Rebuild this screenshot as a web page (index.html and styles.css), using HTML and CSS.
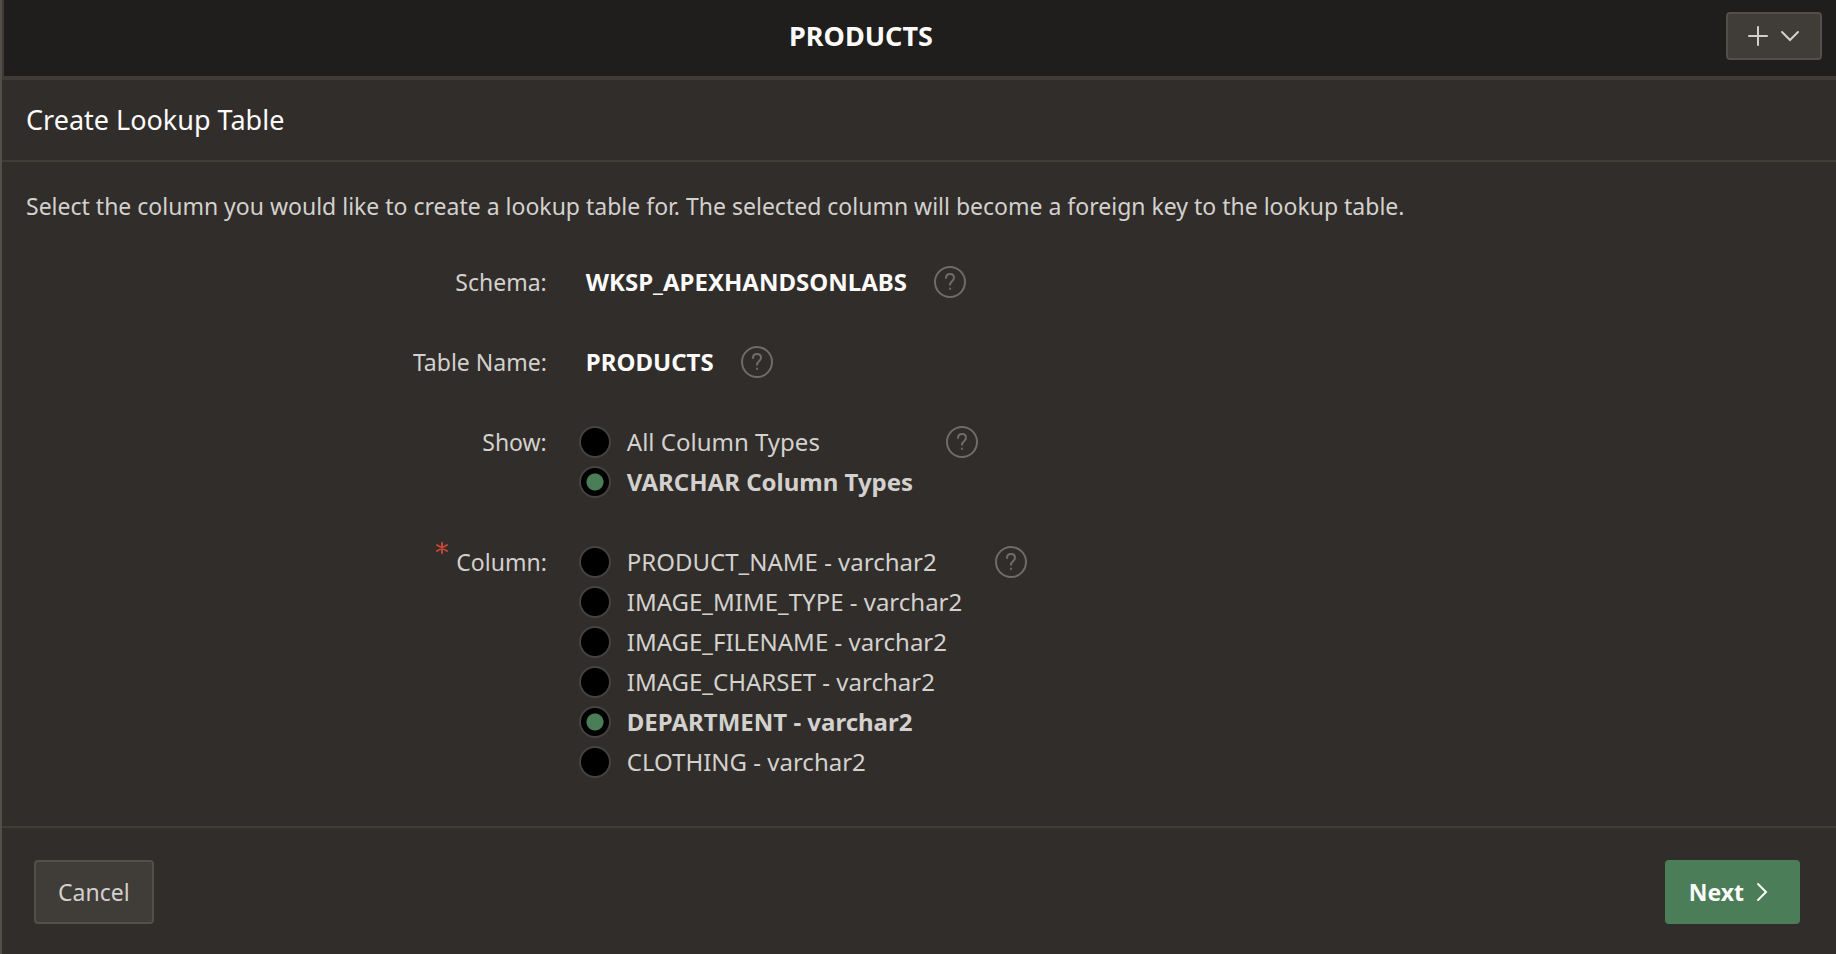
FILE: index.html
```html
<!DOCTYPE html>
<html lang="en">
<head>
<meta charset="utf-8">
<title>Create Lookup Table</title>
<link rel="stylesheet" href="styles.css">
</head>
<body>
<div class="page">
  <header class="topbar">
    <h1 class="topbar-title">PRODUCTS</h1>
    <button class="btn btn-add" type="button" aria-label="Create">
      <svg class="icon-plus" viewBox="0 0 20 20" aria-hidden="true"><path d="M10 1v18M1 10h18"/></svg>
      <svg class="icon-down" viewBox="0 0 20 12" aria-hidden="true"><path d="M2 2l8 8 8-8"/></svg>
    </button>
  </header>
  <form class="wizard">
    <h2 class="wizard-title">Create Lookup Table</h2>
    <div class="wizard-body">
      <p class="intro">Select the column you would like to create a lookup table for. The selected column will become a foreign key to the lookup table.</p>

      <div class="field">
        <label class="field-label" for="schema">Schema:</label>
        <div class="field-value">
          <output class="display" id="schema">WKSP_APEXHANDSONLABS</output>
          <button class="help" type="button" aria-label="Help: Schema"><svg viewBox="0 0 34 34" aria-hidden="true"><circle cx="17" cy="17" r="15"/><path d="M13 13c0-2.600 1.700-4 4-4s4 1.600 4 3.800c0 3.600-4 3.400-4 7"/><path d="M17 23.500v.5"/></svg></button>
        </div>
      </div>

      <div class="field">
        <label class="field-label" for="table-name">Table Name:</label>
        <div class="field-value">
          <output class="display" id="table-name">PRODUCTS</output>
          <button class="help" type="button" aria-label="Help: Table Name"><svg viewBox="0 0 34 34" aria-hidden="true"><circle cx="17" cy="17" r="15"/><path d="M13 13c0-2.600 1.700-4 4-4s4 1.600 4 3.800c0 3.600-4 3.400-4 7"/><path d="M17 23.500v.5"/></svg></button>
        </div>
      </div>

      <div class="field" role="radiogroup" aria-labelledby="show-label">
        <div class="field-label" id="show-label">Show:</div>
        <div class="field-value">
          <div class="options">
            <label class="option"><input class="radio" type="radio" name="show"><span>All Column Types</span></label>
            <label class="option"><input class="radio" type="radio" name="show" checked><span>VARCHAR Column Types</span></label>
          </div>
          <button class="help" type="button" aria-label="Help: Show"><svg viewBox="0 0 34 34" aria-hidden="true"><circle cx="17" cy="17" r="15"/><path d="M13 13c0-2.600 1.700-4 4-4s4 1.600 4 3.800c0 3.600-4 3.400-4 7"/><path d="M17 23.500v.5"/></svg></button>
        </div>
      </div>

      <div class="field" role="radiogroup" aria-labelledby="column-label">
        <div class="field-label" id="column-label"><svg class="required" viewBox="0 0 12 12" aria-hidden="true"><path d="M6 1v10M1 3l10 6M11 3l-10 6"/></svg>Column:</div>
        <div class="field-value">
          <div class="options">
            <label class="option"><input class="radio" type="radio" name="column"><span>PRODUCT_NAME - varchar2</span></label>
            <label class="option"><input class="radio" type="radio" name="column"><span>IMAGE_MIME_TYPE - varchar2</span></label>
            <label class="option"><input class="radio" type="radio" name="column"><span>IMAGE_FILENAME - varchar2</span></label>
            <label class="option"><input class="radio" type="radio" name="column"><span>IMAGE_CHARSET - varchar2</span></label>
            <label class="option"><input class="radio" type="radio" name="column" checked><span>DEPARTMENT - varchar2</span></label>
            <label class="option"><input class="radio" type="radio" name="column"><span>CLOTHING - varchar2</span></label>
          </div>
          <button class="help" type="button" aria-label="Help: Column"><svg viewBox="0 0 34 34" aria-hidden="true"><circle cx="17" cy="17" r="15"/><path d="M13 13c0-2.600 1.700-4 4-4s4 1.600 4 3.800c0 3.600-4 3.400-4 7"/><path d="M17 23.500v.5"/></svg></button>
        </div>
      </div>
    </div>
    <footer class="wizard-footer">
      <button class="btn btn-cancel" type="button">Cancel</button>
      <button class="btn btn-next" type="button">Next
        <svg class="icon-next" viewBox="0 0 12 20" aria-hidden="true"><path d="M2 2l8 8-8 8"/></svg>
      </button>
    </footer>
  </form>
</div>
</body>
</html>
```

FILE: styles.css
```css
* {
  box-sizing: border-box;
}

body {
  margin: 0;
  background: #312d2a;
  color: #d3d1ce;
  font-family: "Noto Sans", "Open Sans", sans-serif;
  font-size: 23px;
  line-height: 40px;
}

svg {
  display: block;
  fill: none;
  stroke: currentColor;
  stroke-width: 2;
  stroke-linecap: round;
}

.page {
  display: flex;
  flex-direction: column;
  min-height: 100vh;
  border-left: 2px solid #524e4a;
}

.topbar {
  display: flex;
  align-items: center;
  gap: 8px;
  padding: 12px 14px 16px 0;
  border-left: 2px solid #3f3c38;
  border-bottom: 4px solid #3f3c37;
  background: #201e1c;
}

.topbar-title {
  flex: 1;
  margin: 0;
  color: #fcfbfa;
  font-size: 27px;
  line-height: 48px;
  font-weight: 700;
  text-align: center;
}

.btn {
  display: flex;
  align-items: center;
  border: 2px solid #524e4a;
  border-radius: 4px;
  background: #403c38;
  color: #d3d1ce;
  font: inherit;
}

.btn-add {
  gap: 12px;
  height: 48px;
  padding: 0 20px;
}

.icon-plus {
  width: 20px;
  height: 20px;
}

.icon-down {
  width: 20px;
  height: 12px;
}

.wizard {
  display: flex;
  flex: 1;
  flex-direction: column;
}

.wizard-title {
  margin: 0;
  padding: 20px 24px;
  border-bottom: 2px solid #403c38;
  color: #fcfbfa;
  font-size: 27px;
  font-weight: 400;
}

.wizard-body {
  flex: 1;
  padding: 24px;
}

.intro {
  margin: 0;
  padding-bottom: 16px;
}

.field {
  display: grid;
  grid-template-columns: 3fr 7fr;
  padding: 20px 0;
}

.field-label {
  display: flex;
  justify-content: flex-end;
  padding-right: 15px;
}

.required {
  width: 12px;
  height: 12px;
  margin-right: 8px;
  color: #c74634;
}

.field-value {
  display: flex;
  align-items: flex-start;
  font-size: 24px;
}

.display {
  padding: 0 26px 0 24px;
  color: #fcfbfa;
  font-weight: 700;
}

.options {
  padding: 0 32px 0 17px;
}

.option {
  display: flex;
  align-items: center;
  gap: 16px;
}

.option:has(:checked) {
  font-weight: 700;
}

.radio {
  appearance: none;
  width: 32px;
  height: 32px;
  margin: 0;
  border: 2px solid #444342;
  border-radius: 50%;
  background: #000;
}

.radio:checked {
  background: radial-gradient(circle, #4a7d58 8px, #000 9px);
}

.help {
  margin: 3px 0;
  padding: 0;
  border: 0;
  background: none;
  color: #6f6c69;
}

.help svg {
  width: 34px;
  height: 34px;
}

.wizard-footer {
  display: flex;
  justify-content: space-between;
  padding: 32px 36px 30px 32px;
  border-top: 2px solid #403c38;
}

.btn-cancel,
.btn-next {
  height: 64px;
  padding: 0 22px;
}

.btn-next {
  gap: 12px;
  padding-right: 30px;
  border-color: #4a7d58;
  background: #4a7d58;
  color: #fcfbfa;
  font-weight: 700;
}

.icon-next {
  width: 12px;
  height: 20px;
}
```
